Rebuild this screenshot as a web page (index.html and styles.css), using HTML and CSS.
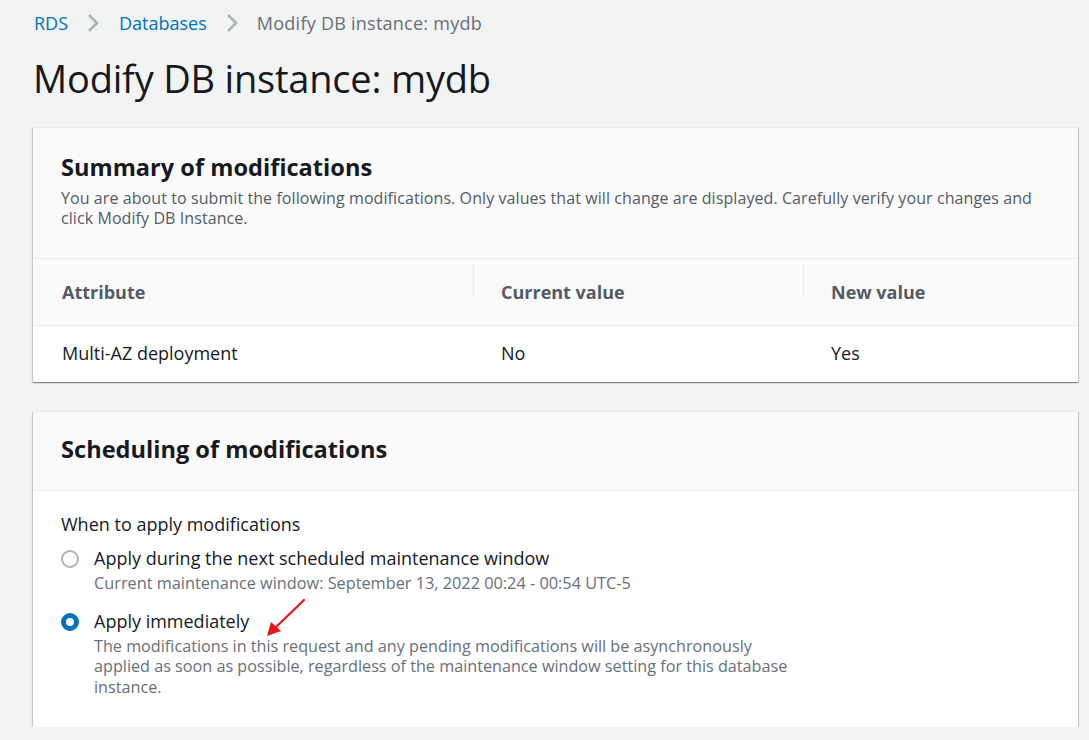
FILE: index.html
```html
<!DOCTYPE html>
<html>
<head>
<meta charset="utf-8">
<link rel="stylesheet" href="styles.css">
</head>
<body>
<div class="page">
  <nav class="crumbs">
    <a class="crumb-link">RDS</a>
    <svg class="chev" width="12" height="20" viewBox="0 0 12 20"><path d="M2 2 L10 10 L2 18" fill="none" stroke="#aab7b8" stroke-width="2.6"/></svg>
    <a class="crumb-link">Databases</a>
    <svg class="chev" width="12" height="20" viewBox="0 0 12 20"><path d="M2 2 L10 10 L2 18" fill="none" stroke="#aab7b8" stroke-width="2.6"/></svg>
    <span class="crumb-current">Modify DB instance: mydb</span>
  </nav>
  <h1 class="title">Modify DB instance: mydb</h1>

  <section class="card">
    <header class="card-head summary-head">
      <h2 class="card-title">Summary of modifications</h2>
      <p class="card-desc">You are about to submit the following modifications. Only values that will change are displayed. Carefully verify your changes and click Modify DB Instance.</p>
    </header>
    <div class="table">
      <div class="thead">
        <div class="th c1">Attribute</div>
        <div class="th c2"><span class="divider"></span>Current value</div>
        <div class="th c3"><span class="divider"></span>New value</div>
      </div>
      <div class="trow">
        <div class="td c1">Multi-AZ deployment</div>
        <div class="td c2">No</div>
        <div class="td c3">Yes</div>
      </div>
    </div>
  </section>

  <section class="card">
    <header class="card-head sched-head">
      <h2 class="card-title">Scheduling of modifications</h2>
    </header>
    <div class="card-body">
      <div class="field-label">When to apply modifications</div>
      <div class="radio-row">
        <span class="radio"></span>
        <div class="radio-text">
          <div class="radio-label">Apply during the next scheduled maintenance window</div>
          <div class="radio-desc">Current maintenance window: September 13, 2022 00:24 - 00:54 UTC-5</div>
        </div>
      </div>
      <div class="radio-row second">
        <span class="radio checked"></span>
        <div class="radio-text">
          <div class="radio-label">Apply immediately</div>
          <div class="radio-desc narrow">The modifications in this request and any pending modifications will be asynchronously applied as soon as possible, regardless of the maintenance window setting for this database instance.</div>
        </div>
        <svg class="arrow" width="50" height="50" viewBox="0 0 50 50"><line x1="44" y1="3" x2="15" y2="31" stroke="#e8141b" stroke-width="2.2" stroke-linecap="round"/><polygon points="7,39 11,25 21,34" fill="#e8141b"/></svg>
      </div>
    </div>
  </section>
</div>
</body>
</html>
```
FILE: styles.css
```css
html, body {
  margin: 0;
  padding: 0;
  background: #f2f3f3;
}
body {
  font-family: "Open Sans", "Noto Sans", sans-serif;
  color: #16191f;
}
.page {
  padding: 0 11px 0 33px;
}
.crumbs {
  display: flex;
  align-items: center;
  height: 46px;
  font-size: 18px;
}
.crumb-link {
  color: #0073bb;
  margin-left: 1px;
}
.chev {
  margin: 0 19px 0 19px;
}
.crumb-current {
  color: #687078;
  letter-spacing: 0.25px;
}
.title {
  margin: 8px 0 0 0;
  font-size: 38px;
  font-weight: 400;
  line-height: 48px;
  letter-spacing: -0.2px;
  color: #16191f;
}
.card {
  background: #fff;
  margin-top: 25px;
  box-shadow: 0 1px 1px 0 rgba(0,28,36,0.3), 1px 1px 1px 0 rgba(0,28,36,0.15), -1px 1px 1px 0 rgba(0,28,36,0.15);
  border-top: 1px solid #eaeded;
}
.card + .card {
  margin-top: 29px;
}
.card-head {
  background: #fafafa;
  border-bottom: 1px solid #eaeded;
  padding: 0 28px;
}
.summary-head {
  padding-top: 24px;
  box-sizing: border-box;
  height: 131px;
}
.sched-head {
  height: 79px;
  box-sizing: border-box;
  padding-bottom: 4px;
  display: flex;
  align-items: center;
}
.card-title {
  margin: 0;
  font-size: 23.6px;
  font-weight: 700;
  line-height: 30px;
  color: #16191f;
}
.card-desc {
  margin: 6px 0 0 0;
  font-size: 16px;
  line-height: 20px;
  letter-spacing: 0.08px;
  color: #545b64;
}
.thead {
  display: flex;
  height: 66px;
  align-items: center;
  background: #fafafa;
  border-bottom: 1px solid #eaeded;
}
.th {
  position: relative;
  font-size: 18px;
  font-weight: 700;
  color: #545b64;
  box-sizing: border-box;
}
.divider {
  position: absolute;
  left: 0;
  top: -16px;
  height: 34px;
  width: 1px;
  background: #eaeded;
}
.c1 { width: 440px; padding-left: 29px; }
.c2 { width: 330px; padding-left: 28px; }
.c3 { flex: 1; padding-left: 28px; }
.trow {
  display: flex;
  height: 54px;
  align-items: center;
  padding-bottom: 2px;
}
.td {
  font-size: 18px;
  color: #16191f;
  box-sizing: border-box;
}
.card-body {
  padding: 20px 28px 30px 28px;
}
.field-label {
  font-size: 18px;
  line-height: 26px;
  margin-bottom: 9px;
}
.radio-row {
  display: flex;
  align-items: flex-start;
  position: relative;
}
.radio-row.second {
  margin-top: 15px;
}
.radio {
  width: 18px;
  height: 18px;
  border-radius: 50%;
  border: 2px solid #aab7b8;
  box-sizing: border-box;
  margin: 4px 15px 0 0;
  flex: none;
  background: #fff;
}
.radio.checked {
  border: 5px solid #0073bb;
}
.radio-label {
  font-size: 18px;
  line-height: 24px;
}
.radio-desc {
  margin-top: 3px;
  font-size: 16.3px;
  line-height: 20.5px;
  color: #687078;
}
.radio-desc.narrow {
  font-size: 16.2px;
  max-width: 706px;
}
.arrow {
  position: absolute;
  left: 199px;
  top: -12px;
}
```
